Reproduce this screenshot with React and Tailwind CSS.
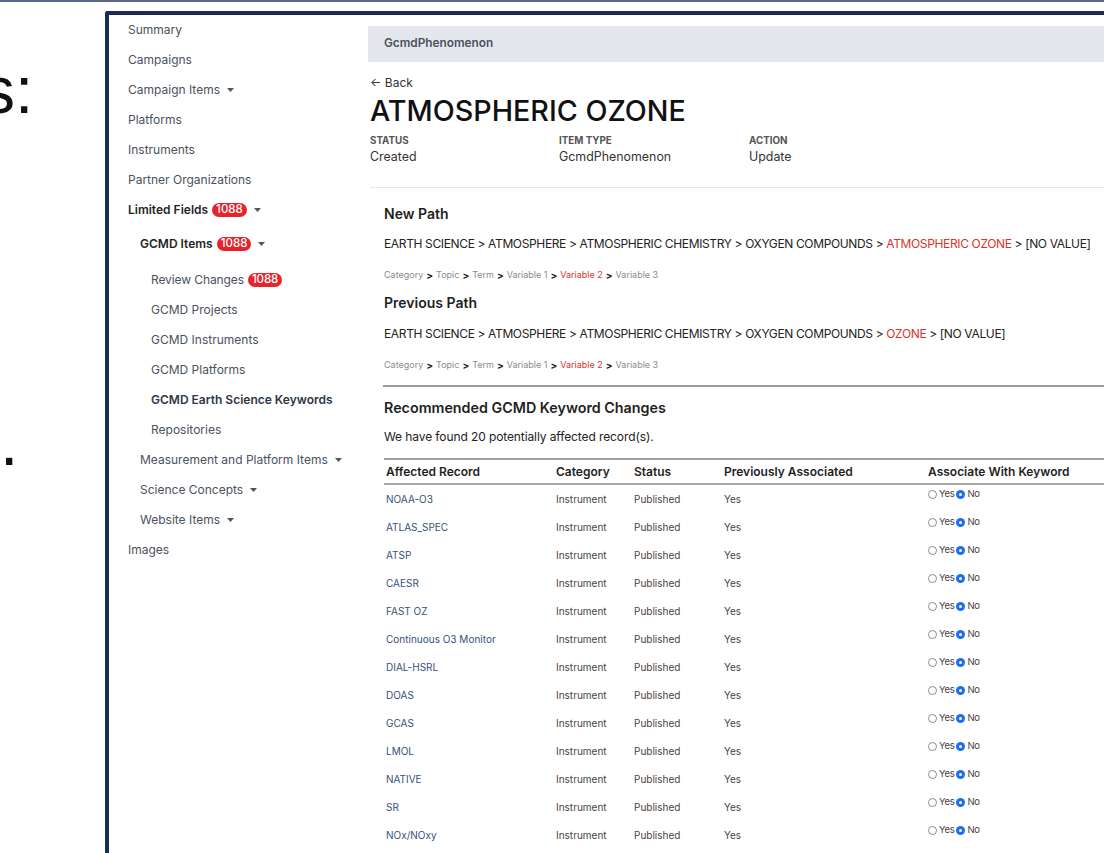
import React from "react";

const Caret = () => (
  <svg width="7" height="4" viewBox="0 0 7 4" className="ml-[7px] text-[#555] shrink-0">
    <path d="M0 0h7L3.5 4z" fill="currentColor" />
  </svg>
);

const Badge = ({ children }) => (
  <span className="ml-[4px] inline-flex items-center h-[14px] px-[4px] rounded-full bg-[#e8232b] text-white text-[11.5px] leading-none font-medium">
    {children}
  </span>
);

const NavItem = ({ indent = 0, bold, dark, caret, badge, className = "", children }) => {
  const pad = indent === 0 ? "pl-[19px]" : indent === 1 ? "pl-[31px]" : "pl-[42px]";
  return (
    <div
      className={`h-[30px] flex items-center ${pad} text-[12px] ${
        bold ? "font-semibold" : ""
      } ${dark ? "text-[#2d3748]" : bold ? "text-[#1f1f1f]" : "text-[#4a5160]"} ${className}`}
    >
      <span>{children}</span>
      {badge && <Badge>{badge}</Badge>}
      {caret && <Caret />}
    </div>
  );
};

const Crumbs = () => {
  const parts = ["Category", "Topic", "Term", "Variable 1", "Variable 2", "Variable 3"];
  return (
    <div className="flex items-center text-[9px] leading-[12px] text-[#8a8a8a]">
      {parts.map((p, i) => (
        <React.Fragment key={p}>
          {i > 0 && <span className="mx-[3px] font-bold text-[10px] text-[#222]">&gt;</span>}
          <span className={p === "Variable 2" ? "text-[#d8332a]" : ""}>{p}</span>
        </React.Fragment>
      ))}
    </div>
  );
};

const Radio = ({ checked }) =>
  checked ? (
    <span className="inline-flex items-center justify-center w-[9px] h-[9px] rounded-full bg-[#1e6ff0]">
      <span className="w-[3px] h-[3px] rounded-full bg-white" />
    </span>
  ) : (
    <span className="inline-block w-[9px] h-[9px] rounded-full border border-[#8d8d8d] bg-white" />
  );

const records = [
  "NOAA-O3",
  "ATLAS_SPEC",
  "ATSP",
  "CAESR",
  "FAST OZ",
  "Continuous O3 Monitor",
  "DIAL-HSRL",
  "DOAS",
  "GCAS",
  "LMOL",
  "NATIVE",
  "SR",
  "NOx/NOxy",
];

export default function App() {
  return (
    <div className="relative w-[1104px] h-[853px] overflow-hidden bg-white">
      <div className="h-[2px] bg-[#5b6785]" />
      <div className="flex">
        {/* slide text column */}
        <div className="w-[105px] shrink-0 font-['Liberation_Sans',Arial,sans-serif] text-[#111]">
          <div className="pt-[55px] -ml-[18px] text-[66px] leading-none">s:</div>
          <div className="mt-[286px] text-[66px] leading-none">.</div>
        </div>

        {/* embedded app window */}
        <div className="flex-1 mt-[9px] h-[842px] border-l-4 border-t-4 border-[#1c2a58] rounded-tl-[3px] flex overflow-hidden font-['Inter',sans-serif]">
          <aside className="w-[259px] shrink-0">
            <NavItem>Summary</NavItem>
            <NavItem>Campaigns</NavItem>
            <NavItem caret>Campaign Items</NavItem>
            <NavItem>Platforms</NavItem>
            <NavItem>Instruments</NavItem>
            <NavItem>Partner Organizations</NavItem>
            <NavItem bold badge="1088" caret>
              Limited Fields
            </NavItem>
            <NavItem indent={1} bold badge="1088" caret className="mt-[4px]">
              GCMD Items
            </NavItem>
            <NavItem indent={2} badge="1088" className="mt-[6px] tracking-[-0.1px]">
              Review Changes
            </NavItem>
            <NavItem indent={2}>GCMD Projects</NavItem>
            <NavItem indent={2}>GCMD Instruments</NavItem>
            <NavItem indent={2}>GCMD Platforms</NavItem>
            <NavItem indent={2} bold dark>
              GCMD Earth Science Keywords
            </NavItem>
            <NavItem indent={2}>Repositories</NavItem>
            <NavItem indent={1} caret>
              Measurement and Platform Items
            </NavItem>
            <NavItem indent={1} caret>
              Science Concepts
            </NavItem>
            <NavItem indent={1} caret>
              Website Items
            </NavItem>
            <NavItem>Images</NavItem>
          </aside>

          <main className="flex-1 min-w-0 text-[#222]">
            <div className="mt-[11px] h-[36px] bg-[#e4e7eb] flex items-center pl-[16px] text-[11.8px] font-semibold text-[#4a5260]">
              GcmdPhenomenon
            </div>

            <div className="pl-[2px]">
              <div className="mt-[13px] text-[12px] leading-[16px] text-[#333]">← Back</div>
              <h1 className="mt-[4px] text-[28.7px] leading-[32px] font-medium text-[#111] whitespace-nowrap">
                ATMOSPHERIC OZONE
              </h1>
              <div className="mt-[8px] grid grid-cols-[189px_190px_200px]">
                <div>
                  <div className="text-[9.8px] leading-[12px] font-bold text-[#555]">STATUS</div>
                  <div className="mt-[2px] text-[12.4px] leading-[16px] text-[#333]">Created</div>
                </div>
                <div>
                  <div className="text-[9.8px] leading-[12px] font-bold text-[#555]">ITEM TYPE</div>
                  <div className="mt-[2px] text-[12.4px] leading-[16px] text-[#333]">GcmdPhenomenon</div>
                </div>
                <div>
                  <div className="text-[9.8px] leading-[12px] font-bold text-[#555]">ACTION</div>
                  <div className="mt-[2px] text-[12.4px] leading-[16px] text-[#333]">Update</div>
                </div>
              </div>
              <div className="mt-[22px] border-t border-[#e6e6e6]" />
            </div>

            <div className="pl-[16px] whitespace-nowrap">
              <h2 className="mt-[16px] text-[14px] leading-[20px] font-semibold text-[#1f1f1f]">New Path</h2>
              <div className="mt-[12px] text-[12px] leading-[16px] tracking-[-0.36px] text-[#222]">
                EARTH SCIENCE &gt; ATMOSPHERE &gt; ATMOSPHERIC CHEMISTRY &gt; OXYGEN COMPOUNDS &gt;{" "}
                <span className="text-[#d8332a]">ATMOSPHERIC OZONE</span> &gt; [NO VALUE]
              </div>
              <div className="mt-[17px]">
                <Crumbs />
              </div>

              <h2 className="mt-[12px] text-[14px] leading-[20px] font-semibold text-[#1f1f1f]">Previous Path</h2>
              <div className="mt-[13px] text-[12px] leading-[16px] tracking-[-0.36px] text-[#222]">
                EARTH SCIENCE &gt; ATMOSPHERE &gt; ATMOSPHERIC CHEMISTRY &gt; OXYGEN COMPOUNDS &gt;{" "}
                <span className="text-[#d8332a]">OZONE</span> &gt; [NO VALUE]
              </div>
              <div className="mt-[17px]">
                <Crumbs />
              </div>
            </div>

            <div className="ml-[15px] mt-[14px] border-t-2 border-[#9a9a9a]" />

            <div className="pl-[16px]">
              <h2 className="mt-[11px] text-[14.3px] leading-[20px] font-semibold text-[#1f1f1f]">
                Recommended GCMD Keyword Changes
              </h2>
              <div className="mt-[11px] text-[12px] leading-[16px] text-[#222] tracking-[-0.1px]">
                We have found 20 potentially affected record(s).
              </div>

              <div className="mt-[13px] border-t-2 border-[#a0a0a0] w-[800px]">
                <div className="h-[25px] grid grid-cols-[170px_78px_90px_204px_200px] items-center pl-[2px] text-[12px] font-semibold text-[#1f1f1f] border-b-2 border-[#a8a8a8]">
                  <div>Affected Record</div>
                  <div>Category</div>
                  <div>Status</div>
                  <div>Previously Associated</div>
                  <div>Associate With Keyword</div>
                </div>
                {records.map((r) => (
                  <div
                    key={r}
                    className="h-[28px] grid grid-cols-[170px_78px_90px_204px_200px] items-start pl-[2px] text-[10px]"
                  >
                    <div className="pt-[8px] leading-[12px] text-[#37507a]">{r}</div>
                    <div className="pt-[8px] leading-[12px] text-[#444]">Instrument</div>
                    <div className="pt-[8px] leading-[12px] text-[#444]">Published</div>
                    <div className="pt-[8px] leading-[12px] text-[#444]">Yes</div>
                    <div className="pt-[3px] leading-[12px] flex items-center gap-[2px] text-[#444] text-[9.5px] tracking-[-0.3px]">
                      <Radio />
                      <span>Yes</span>
                      <Radio checked />
                      <span>No</span>
                    </div>
                  </div>
                ))}
              </div>
            </div>
          </main>
        </div>
      </div>
    </div>
  );
}
